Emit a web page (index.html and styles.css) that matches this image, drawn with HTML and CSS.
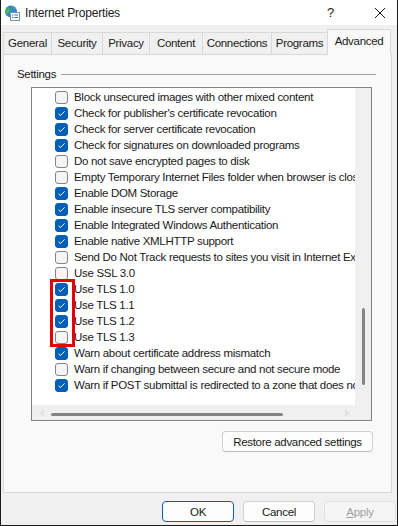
FILE: index.html
```html
<!DOCTYPE html>
<html lang="en">
<head>
  <meta charset="UTF-8">
  <title>Internet Properties</title>
  <link rel="stylesheet" href="styles.css">
</head>
<body>
  <div class="window">
    <div class="titlebar">
      <svg class="app-icon" width="16" height="16" viewBox="0 0 16 16">
        <circle cx="7" cy="6.5" r="6" fill="#2a86d8"/>
        <path d="M3 3.5 C4.5 2.5 6 3 6.5 4.5 C7 6 5 6.5 4.5 8 C4 9.5 2.5 9 1.8 8 C1 6 1.8 4.5 3 3.5Z" fill="#4fb548"/>
        <path d="M8 1.5 C10 1.5 11.5 3 11.5 4 C10.5 4.5 9 4 8.5 3Z" fill="#4fb548"/>
        <rect x="6.5" y="7.5" width="9" height="8" fill="#fff" stroke="#7d8ea3" stroke-width="1"/>
        <path d="M8 10h1.5M8 12.5h1.5M10.5 10h3.5M10.5 12.5h3.5" stroke="#2a6fc9" stroke-width="1.2"/>
      </svg>
      <span class="title">Internet Properties</span>
      <span class="help">?</span>
      <svg class="close" width="12" height="12" viewBox="0 0 12 12">
        <path d="M1 1L11 11M11 1L1 11" stroke="#1a1a1a" stroke-width="1"/>
      </svg>
    </div>

    <div class="tabs">
      <div class="tab">General</div>
      <div class="tab">Security</div>
      <div class="tab">Privacy</div>
      <div class="tab">Content</div>
      <div class="tab">Connections</div>
      <div class="tab">Programs</div>
      <div class="tab active">Advanced</div>
    </div>

    <div class="panel">
      <div class="group-label">
        <span>Settings</span>
        <div class="group-line"></div>
      </div>

      <div class="listbox">
        <div class="list-items">
          <div class="item"><span class="check"></span>Block unsecured images with other mixed content</div>
          <div class="item"><span class="check on"></span>Check for publisher's certificate revocation</div>
          <div class="item"><span class="check on"></span>Check for server certificate revocation</div>
          <div class="item"><span class="check on"></span>Check for signatures on downloaded programs</div>
          <div class="item"><span class="check"></span>Do not save encrypted pages to disk</div>
          <div class="item"><span class="check"></span>Empty Temporary Internet Files folder when browser is closed</div>
          <div class="item"><span class="check on"></span>Enable DOM Storage</div>
          <div class="item"><span class="check on"></span>Enable insecure TLS server compatibility</div>
          <div class="item"><span class="check on"></span>Enable Integrated Windows Authentication</div>
          <div class="item"><span class="check on"></span>Enable native XMLHTTP support</div>
          <div class="item"><span class="check"></span>Send Do Not Track requests to sites you visit in Internet Explorer</div>
          <div class="item"><span class="check"></span>Use SSL 3.0</div>
          <div class="item"><span class="check on"></span>Use TLS 1.0</div>
          <div class="item"><span class="check on"></span>Use TLS 1.1</div>
          <div class="item"><span class="check on"></span>Use TLS 1.2</div>
          <div class="item"><span class="check"></span>Use TLS 1.3</div>
          <div class="item"><span class="check on"></span>Warn about certificate address mismatch</div>
          <div class="item"><span class="check"></span>Warn if changing between secure and not secure mode</div>
          <div class="item"><span class="check on"></span>Warn if POST submittal is redirected to a zone that does not permit posts</div>
        </div>
        <div class="vscroll">
          <div class="vthumb"></div>
        </div>
        <div class="hscroll">
          <svg class="arrow" width="6" height="8" viewBox="0 0 6 8"><path d="M5 0L0 4L5 8Z" fill="#e2e2e2"/></svg>
          <div class="htrack"><div class="hthumb"></div></div>
          <svg class="arrow" width="6" height="8" viewBox="0 0 6 8"><path d="M1 0L6 4L1 8Z" fill="#e2e2e2"/></svg>
        </div>
        <div class="corner"></div>
        <div class="highlight"></div>
      </div>

      <div class="restore-row">
        <button class="btn restore">Restore advanced settings</button>
      </div>
    </div>

    <div class="footer">
      <button class="btn default">OK</button>
      <button class="btn">Cancel</button>
      <button class="btn disabled"><u>A</u>pply</button>
    </div>
  </div>
</body>
</html>
```

FILE: styles.css
```css
body {
  margin: 0;
  font-family: "Liberation Sans", Arial, sans-serif;
  font-size: 11.5px;
  letter-spacing: -0.3px;
  color: #1a1a1a;
}
.window {
  width: 398px;
  height: 526px;
  box-sizing: border-box;
  border: 1px solid #1a1a1a;
  border-top: none;
  background: #f0f0f0;
  display: flex;
  flex-direction: column;
  overflow: hidden;
}
.titlebar {
  height: 25px;
  flex-shrink: 0;
  background: #fff;
  display: flex;
  align-items: center;
  padding-left: 3px;
}
.app-icon {
  margin-right: 5px;
}
.title {
  font-size: 12px;
  letter-spacing: -0.2px;
  flex: 1;
}
.help {
  font-size: 13px;
  margin-right: 40px;
}
.close {
  margin-right: 11px;
}
.tabs {
  display: grid;
  grid-template-columns: 49px 51px 47px 53px 69px 56px 63px;
  align-items: end;
  height: 29px;
  padding-left: 2px;
  flex-shrink: 0;
}
.tab {
  height: 21px;
  line-height: 21px;
  text-align: center;
  border: 1px solid #d9d9d9;
  border-bottom: none;
  border-left: none;
  background: #f0f0f0;
}
.tab:first-child {
  border-left: 1px solid #d9d9d9;
}
.tab.active {
  height: 25px;
  line-height: 23px;
  background: #f9f9f9;
  border-left: 1px solid #d9d9d9;
  margin-left: -1px;
  margin-bottom: -1px;
  position: relative;
  z-index: 1;
}
.panel {
  margin: 0 5px 0 2px;
  height: 439px;
  box-sizing: border-box;
  background: #f9f9f9;
  border: 1px solid #d9d9d9;
  padding: 12px 0 0 13px;
}
.group-label {
  display: flex;
  align-items: center;
  height: 14px;
  margin-right: 15px;
}
.group-line {
  flex: 1;
  height: 1px;
  background: #a0a0a0;
  margin-left: 5px;
}
.listbox {
  position: relative;
  margin: 6px 19px 0 14px;
  height: 332px;
  border: 1px solid #828282;
  background: #fff;
  display: grid;
  grid-template-columns: 1fr 16px;
  grid-template-rows: 1fr 15px;
}
.list-items {
  overflow: hidden;
  padding-top: 1px;
}
.item {
  height: 16px;
  display: flex;
  align-items: center;
  padding-left: 23px;
  white-space: nowrap;
}
.check {
  width: 13px;
  height: 13px;
  box-sizing: border-box;
  flex-shrink: 0;
  margin-right: 6px;
  border: 1px solid #868686;
  border-radius: 3px;
  background: #f5f5f5;
}
.check.on {
  border-color: #005fb8;
  background: #005fb8 url("data:image/svg+xml,%3Csvg xmlns='http://www.w3.org/2000/svg' width='11' height='11' viewBox='0 0 11 11'%3E%3Cpath d='M2.5 5.8L4.5 7.6L8.5 3.4' fill='none' stroke='white' stroke-width='1'/%3E%3C/svg%3E") center no-repeat;
}
.vscroll {
  background: #f0f0f0;
  position: relative;
}
.vthumb {
  position: absolute;
  left: 7px;
  top: 220px;
  width: 3px;
  height: 77px;
  border-radius: 2px;
  background: #858585;
}
.hscroll {
  background: #f0f0f0;
  display: flex;
  align-items: center;
  padding: 0 5px 0 7px;
}
.htrack {
  flex: 1;
  height: 3px;
  margin: 3px 6px 0;
}
.hthumb {
  width: 232px;
  height: 3px;
  border-radius: 2px;
  background: #858585;
}
.corner {
  background: #f0f0f0;
}
.highlight {
  position: absolute;
  left: 18px;
  top: 191px;
  width: 19px;
  height: 62px;
  border: 3px solid #e60000;
}
.restore-row {
  display: flex;
  justify-content: flex-end;
  margin: 10px 18px 0 0;
}
.btn {
  font-family: inherit;
  font-size: 11.5px;
  letter-spacing: -0.3px;
  color: #1a1a1a;
  height: 21px;
  width: 72px;
  box-sizing: border-box;
  border: 1px solid #d0d0d0;
  border-bottom-color: #bcbcbc;
  border-radius: 4px;
  background: #fdfdfd;
  padding: 0;
}
.btn.restore {
  width: 151px;
}
.footer {
  flex: 1;
  display: flex;
  justify-content: flex-end;
  align-items: flex-start;
  gap: 9px;
  padding: 8px 1px 0 0;
}
.btn.default {
  border: 1px solid #005fb8;
}
.btn.disabled {
  color: #a0a0a0;
  background: #f5f5f5;
  border-color: #e0e0e0;
}
```
